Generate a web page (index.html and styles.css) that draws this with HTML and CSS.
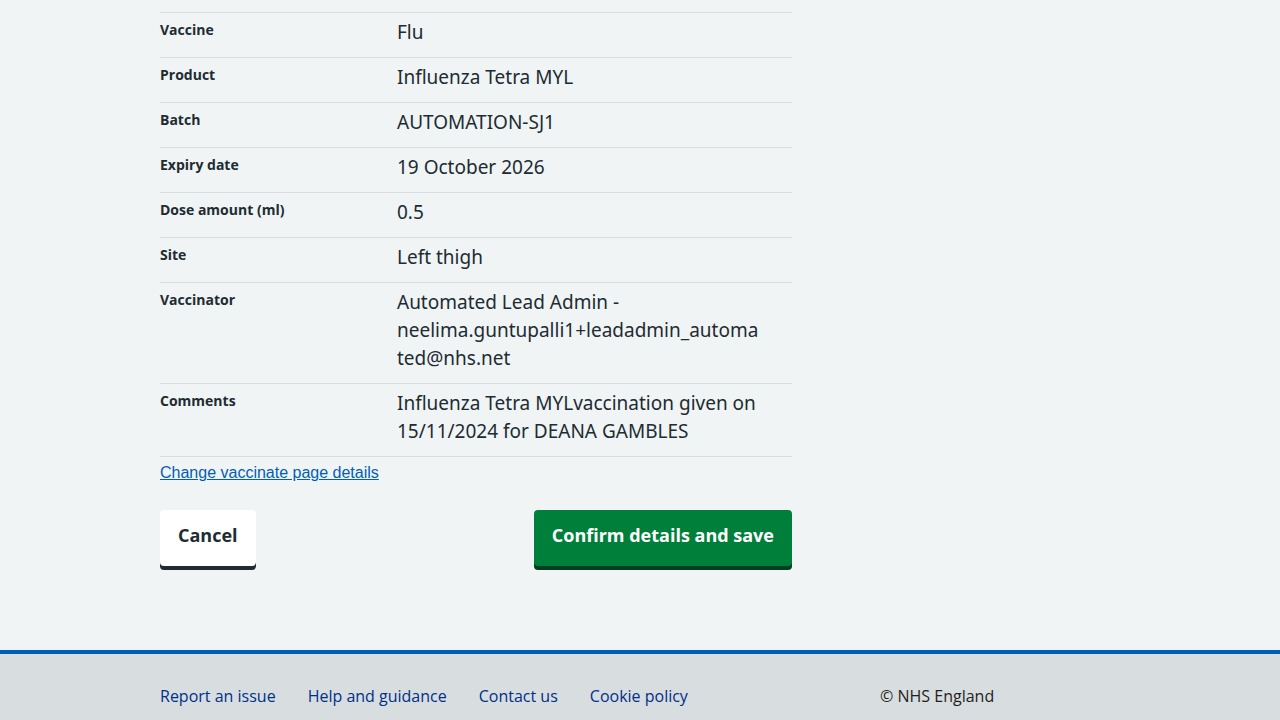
FILE: index.html
```html
<!DOCTYPE html>
<html lang="en">
<head>
<meta charset="utf-8">
<meta name="viewport" content="width=device-width, initial-scale=1">
<title>Confirm vaccination details</title>
<link rel="stylesheet" href="styles.css">
</head>
<body>
<main class="container main">
  <div class="column">
    <dl class="summary">
      <div class="row"><dt>Vaccine</dt><dd>Flu</dd></div>
      <div class="row"><dt>Product</dt><dd>Influenza Tetra MYL</dd></div>
      <div class="row"><dt>Batch</dt><dd>AUTOMATION-SJ1</dd></div>
      <div class="row"><dt>Expiry date</dt><dd>19 October 2026</dd></div>
      <div class="row"><dt>Dose amount (ml)</dt><dd>0.5</dd></div>
      <div class="row"><dt>Site</dt><dd>Left thigh</dd></div>
      <div class="row"><dt>Vaccinator</dt><dd>Automated Lead Admin - neelima.guntupalli1+leadadmin_automa<wbr>ted@nhs.net</dd></div>
      <div class="row"><dt>Comments</dt><dd>Influenza Tetra MYLvaccination given on 15/11/2024 for DEANA GAMBLES</dd></div>
    </dl>
    <a class="change" href="#">Change vaccinate page details</a>
    <div class="actions">
      <button class="button button-cancel" type="button">Cancel</button>
      <button class="button button-save" type="submit">Confirm details and save</button>
    </div>
  </div>
</main>
<footer class="footer">
  <div class="container footer-inner">
    <ul class="links">
      <li><a href="#">Report an issue</a></li>
      <li><a href="#">Help and guidance</a></li>
      <li><a href="#">Contact us</a></li>
      <li><a href="#">Cookie policy</a></li>
    </ul>
    <p class="copyright">© NHS England</p>
  </div>
</footer>
</body>
</html>
```
FILE: styles.css
```css
* {
  box-sizing: border-box;
}

body {
  margin: 0;
  min-height: 100vh;
  display: flex;
  flex-direction: column;
  background: #f0f4f5;
  color: #212b32;
  font-family: "Noto Sans", Arial, sans-serif;
}

.container {
  width: 100%;
  max-width: 1024px;
  margin: 0 auto;
  padding: 0 32px;
}

.main {
  padding-top: 12px;
  padding-bottom: 80px;
}

.column {
  width: calc(200% / 3 - 8px);
}

.summary {
  margin: 0;
  border-top: 1px solid #d8dde0;
}

.row {
  display: grid;
  grid-template-columns: 3fr 5fr;
  padding: 5px 0 11px;
  border-bottom: 1px solid #d8dde0;
}

dt {
  font: 700 14px/24px "Open Sans", sans-serif;
}

dd {
  margin: 0;
  padding-right: 24px;
  font: 19px/28px "Noto Sans", sans-serif;
}

.change {
  display: inline-block;
  margin-top: 4px;
  color: #005eb8;
  font: 16px/24px "Liberation Sans", Arial, sans-serif;
}

.actions {
  display: flex;
  flex-wrap: wrap;
  justify-content: space-between;
  gap: 16px;
  margin-top: 25px;
}

.button {
  border: 0;
  border-radius: 4px;
  padding: 11px 18px 17px;
  margin-bottom: 4px;
  font: 700 18px/28px "Open Sans", sans-serif;
  cursor: pointer;
}

.button-cancel {
  background: #fff;
  color: #212b32;
  box-shadow: 0 4px 0 #212b32;
}

.button-save {
  background: #007f3b;
  color: #fff;
  box-shadow: 0 4px 0 #00401e;
}

.footer {
  flex-grow: 1;
  border-top: 4px solid #005eb8;
  background: #d8dde0;
  color: #231f20;
  font: 16px/24px "Open Sans", sans-serif;
}

.footer-inner {
  display: flex;
  justify-content: space-between;
  gap: 32px;
  padding-top: 30px;
}

.links {
  display: flex;
  flex-wrap: wrap;
  gap: 0 32px;
  margin: 0;
  padding: 0;
  list-style: none;
}

.links a {
  color: #003087;
  text-decoration: none;
}

.copyright {
  width: 240px;
  margin: 0;
}
```
